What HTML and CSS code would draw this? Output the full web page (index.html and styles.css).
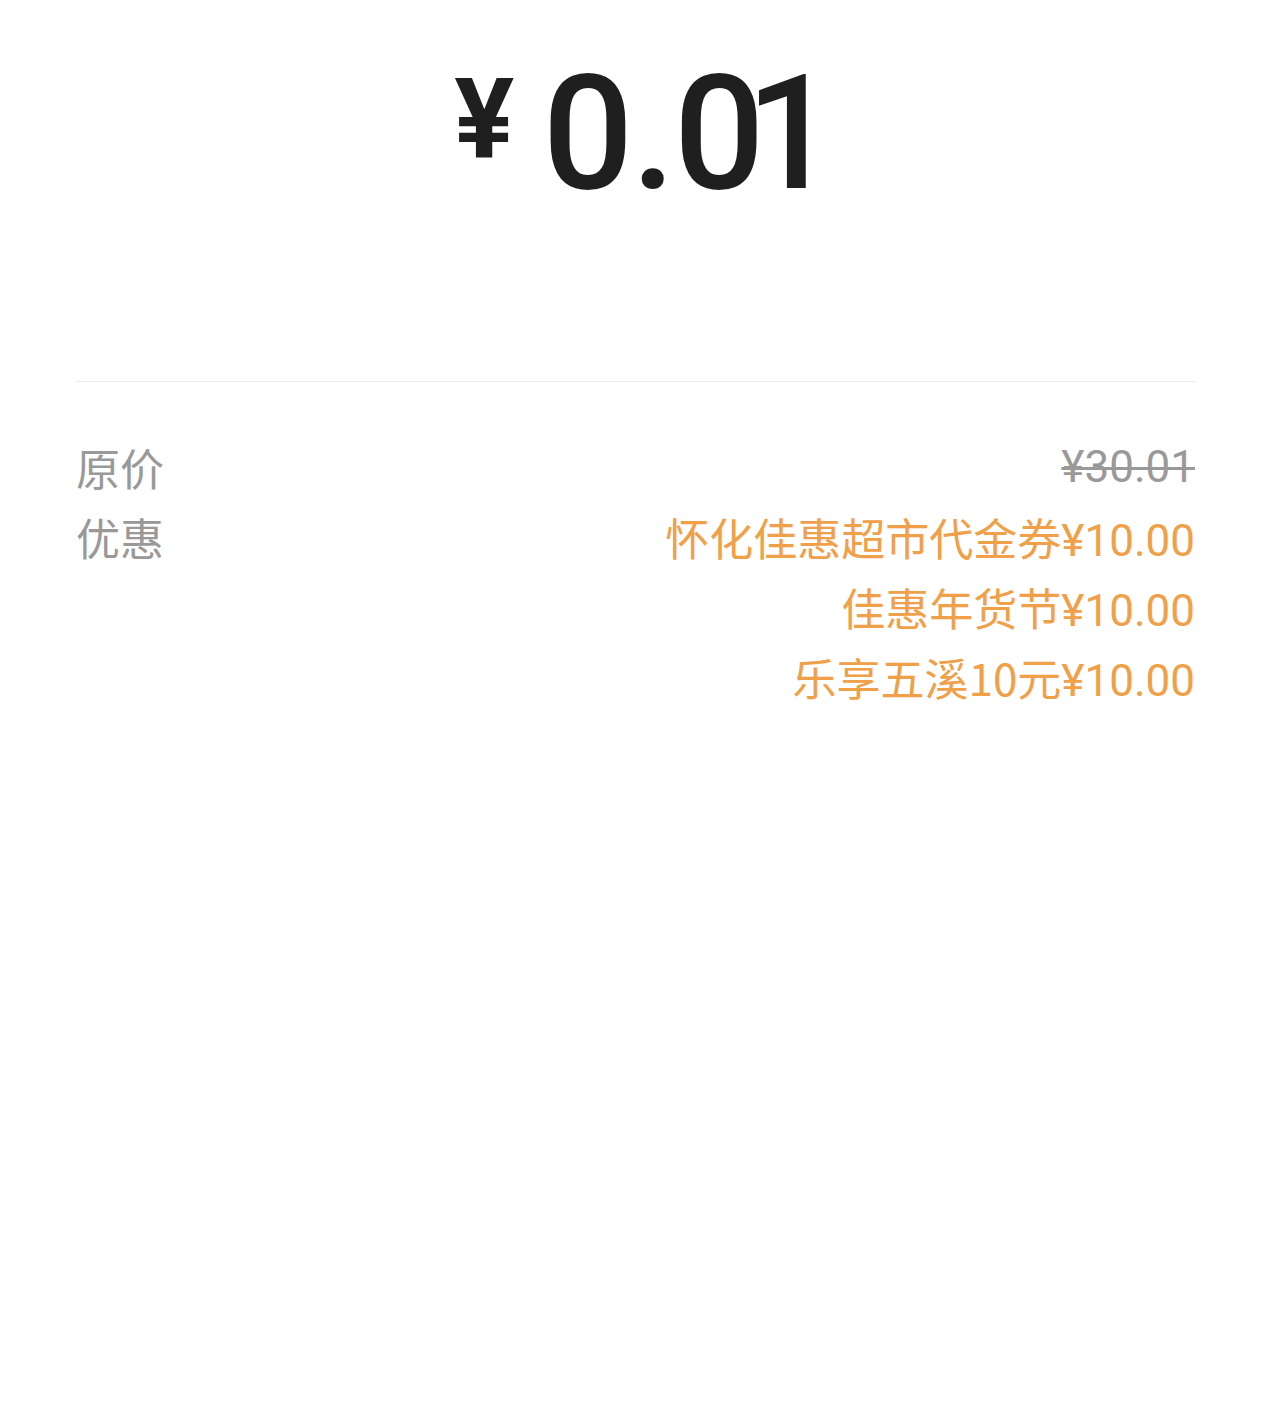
FILE: index.html
```html
<!DOCTYPE html>
<html lang="zh-CN">

<head>
    <meta charset="UTF-8">
    <meta name="viewport" content="width=device-width, initial-scale=1.0">
    <title>支付详情</title>
    <link rel="stylesheet" href="styles.css">
</head>

<body>

    <div class="page">
        <div class="amount">
            <span class="amount-symbol">¥</span>
            <span class="amount-value">0.<span class="amount-tight">0</span>1</span>
        </div>

        <div class="divider"></div>

        <div class="detail">
            <div class="detail-row">
                <div class="detail-label">原价</div>
                <div class="detail-value original">¥30.01</div>
            </div>
            <div class="detail-row">
                <div class="detail-label">优惠</div>
                <div class="detail-value">
                    <div class="discount"><span class="discount-name">怀化佳惠超市代金券</span>¥10.00</div>
                    <div class="discount"><span class="discount-name">佳惠年货节</span>¥10.00</div>
                    <div class="discount"><span class="discount-name">乐享五溪10元</span>¥10.00</div>
                </div>
            </div>
        </div>
    </div>

</body>

</html>
```

FILE: styles.css
```css
body {
    font-family: Roboto, "Noto Sans CJK SC", sans-serif;
    margin: 0;
    padding: 0;
    background-color: #fff;
    color: #1f1f1f;
}

.page {
    padding: 0 77px 0 76px;
}

.amount {
    display: flex;
    justify-content: center;
    align-items: flex-start;
    padding-top: 54px;
    height: 216px;
    margin-left: 18px;
}

.amount-symbol {
    font-size: 112px;
    font-weight: 700;
    line-height: 1;
    margin-top: 9px;
    margin-right: 28px;
}

.amount-value {
    font-size: 160px;
    font-weight: 500;
    line-height: 1;
    letter-spacing: -2px;
}

/* the tabular "1" leaves a wide gap, pull it in */
.amount-tight {
    letter-spacing: -19px;
}

.divider {
    height: 1px;
    background-color: #ebebeb;
    margin-top: 111px;
}

.detail {
    padding-top: 50px;
}

.detail-row {
    display: flex;
    justify-content: space-between;
    font-size: 44px;
    line-height: 70px;
}

.detail-label {
    font-family: "Noto Sans CJK SC", sans-serif;
    color: #999;
}

.detail-value {
    text-align: right;
    color: #f0a048;
}

.detail-value.original {
    color: #999;
    text-decoration: line-through;
    text-decoration-thickness: 3px;
}

.discount {
    height: 70px;
    overflow: hidden;
}

.discount-name {
    font-family: "Noto Sans CJK SC", sans-serif;
}
```
